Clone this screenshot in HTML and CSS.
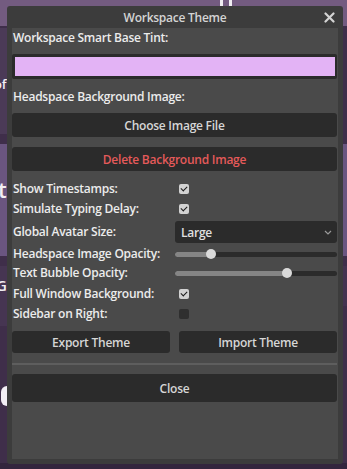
FILE: index.html
```html
<!DOCTYPE html>
<html lang="en">
<head>
    <meta charset="UTF-8">
    <meta name="viewport" content="width=device-width, initial-scale=1.0">
    <title>Workspace Theme</title>
    <link rel="stylesheet" href="styles.css">
</head>
<body>
    <div class="app">
        <div class="topbar"><span class="pause-mark"></span></div>
        <div class="stage">
            <div class="side-left">
                <div class="blk blk-a"><span class="peek">of</span></div>
                <div class="blk blk-b"><span class="peek peek-big">lt</span></div>
                <div class="blk blk-c"><span class="peek">G</span></div>
                <div class="blk blk-d"><span class="peek-moon"></span></div>
            </div>
            <div class="side-right">
                <div class="blk blk-r1"></div>
                <div class="blk blk-r2"></div>
            </div>
        </div>
        <div class="bottombar"></div>
    </div>

    <div class="dialog">
        <div class="dialog-title">
            <span>Workspace Theme</span>
            <svg class="close-x" width="11" height="11" viewBox="0 0 11 11">
                <path d="M1.5 1.5 L9.5 9.5 M9.5 1.5 L1.5 9.5" stroke="#d4d4d4" stroke-width="2.2" stroke-linecap="round"/>
            </svg>
        </div>
        <div class="dialog-body">
            <div class="label first">Workspace Smart Base Tint:</div>
            <div class="color-pick"><div class="swatch"></div></div>

            <div class="label second">Headspace Background Image:</div>
            <button class="button choose">Choose Image File</button>
            <button class="button danger">Delete Background Image</button>

            <div class="settings">
                <div class="row">
                    <span class="label">Show Timestamps:</span>
                    <span class="check on"></span>
                </div>
                <div class="row">
                    <span class="label">Simulate Typing Delay:</span>
                    <span class="check on"></span>
                </div>
                <div class="row row-select">
                    <span class="label">Global Avatar Size:</span>
                    <div class="select">
                        <span>Large</span>
                        <svg width="8" height="5" viewBox="0 0 8 5"><path d="M1 1 L4 4 L7 1" fill="none" stroke="#9a9a9a" stroke-width="1.2"/></svg>
                    </div>
                </div>
                <div class="row row-slider">
                    <span class="label">Headspace Image Opacity:</span>
                    <div class="slider"><div class="fill" style="width: 22%"></div><div class="grab" style="left: 22%"></div></div>
                </div>
                <div class="row row-slider">
                    <span class="label">Text Bubble Opacity:</span>
                    <div class="slider"><div class="fill" style="width: 69%"></div><div class="grab" style="left: 69%"></div></div>
                </div>
                <div class="row after-slider">
                    <span class="label">Full Window Background:</span>
                    <span class="check on"></span>
                </div>
                <div class="row">
                    <span class="label">Sidebar on Right:</span>
                    <span class="check"></span>
                </div>
            </div>

            <div class="pair">
                <button class="button">Export Theme</button>
                <button class="button">Import Theme</button>
            </div>
            <div class="separator"></div>
            <button class="button close">Close</button>
        </div>
    </div>
</body>
</html>
```

FILE: styles.css
```css
* {
    box-sizing: border-box;
}
body {
    margin: 0;
    width: 347px;
    height: 469px;
    overflow: hidden;
    font-family: "Open Sans", "Noto Sans", sans-serif;
    font-weight: 600;
    font-size: 12px;
    letter-spacing: -0.25px;
    background: #3f2e4a;
}
.app {
    display: flex;
    flex-direction: column;
    height: 469px;
}
.topbar {
    height: 26px;
    background: #735b80;
    position: relative;
}
.pause-mark {
    position: absolute;
    left: 220px;
    top: 0;
    width: 12px;
    height: 6px;
    border-left: 3px solid #f0eef2;
    border-right: 3px solid #f0eef2;
}
.stage {
    flex: 1;
    display: flex;
    justify-content: space-between;
}
.side-left {
    width: 8px;
    display: flex;
    flex-direction: column;
    padding-top: 2px;
    overflow: hidden;
}
.side-right {
    width: 5px;
    display: flex;
    flex-direction: column;
    padding-top: 118px;
}
.blk {
    position: relative;
}
.blk-a {
    height: 106px;
    background: #4b3a57;
}
.blk-b {
    height: 112px;
    margin-top: 10px;
    background: #6a5580;
}
.blk-c {
    height: 60px;
    margin-top: 10px;
    background: #463552;
}
.blk-d {
    height: 90px;
    margin-top: 10px;
    background: #3f2e4a;
}
.blk-r1 {
    height: 112px;
    background: #6a5580;
}
.blk-r2 {
    height: 40px;
    margin-top: 10px;
    background: #443350;
}
.peek {
    position: absolute;
    left: -6px;
    top: 50px;
    color: #f2eef4;
    font-size: 13px;
    line-height: 1;
}
.peek-big {
    top: 34px;
    font-size: 22px;
    left: -8px;
}
.blk-c .peek {
    top: 12px;
    left: -4px;
    font-size: 15px;
}
.peek-moon {
    position: absolute;
    left: 1px;
    top: 50px;
    width: 6px;
    height: 20px;
    background: #f2eef4;
    border-radius: 6px 0 0 6px;
}
.bottombar {
    height: 6px;
    background: #33253d;
}

.dialog {
    position: absolute;
    left: 7px;
    top: 6px;
    width: 336px;
    height: 458px;
    background: #3c3c3c;
    border-radius: 3px;
    display: flex;
    flex-direction: column;
}
.dialog-title {
    height: 22px;
    display: flex;
    align-items: center;
    justify-content: center;
    color: #d4d4d4;
    position: relative;
}
.close-x {
    position: absolute;
    right: 8px;
    top: 6px;
}
.dialog-body {
    flex: 1;
    margin: 0 5px 5px;
    background: #4a4a4a;
    display: flex;
    flex-direction: column;
}
.label {
    color: #ececec;
    height: 20px;
    line-height: 20px;
    padding-left: 1px;
    white-space: nowrap;
}
.color-pick {
    margin-top: 6px;
    height: 25px;
    margin-right: 1px;
    background: #2b2b2b;
    border-radius: 2px;
    padding: 3px 2px 3px 3px;
}
.swatch {
    height: 100%;
    background: #e3b3f5;
}
.label.second {
    margin-top: 8px;
}
.button {
    font: inherit;
    letter-spacing: inherit;
    height: 24px;
    border: none;
    border-radius: 3px;
    background: #2b2b2b;
    color: #d6d6d6;
    padding: 0;
    margin-right: 1px;
}
.choose {
    margin-top: 6px;
}
.danger {
    margin-top: 10px;
    color: #e55a5a;
}
.settings {
    margin-top: 8px;
    display: flex;
    flex-direction: column;
}
.row {
    display: grid;
    grid-template-columns: 163px 1fr;
    align-items: center;
    height: 20px;
}
.row-select {
    height: 22px;
    margin-top: 2px;
}
.row-slider {
    height: 19px;
}
.row-select + .row-slider {
    margin-top: 1px;
}
.after-slider {
    margin-top: 2px;
}
.check {
    width: 10px;
    height: 10px;
    margin-left: 4px;
    border-radius: 2px;
    background: #2f2f2f;
    position: relative;
}
.check.on {
    background: #d2d2d2;
}
.check.on::after {
    content: "";
    position: absolute;
    left: 2px;
    top: 2px;
    width: 5px;
    height: 3px;
    border-left: 1.5px solid #1c1c1c;
    border-bottom: 1.5px solid #1c1c1c;
    transform: rotate(-45deg);
}
.select {
    height: 22px;
    margin-right: 1px;
    background: #2b2b2b;
    border-radius: 3px;
    color: #e0e0e0;
    display: flex;
    align-items: center;
    justify-content: space-between;
    padding: 0 5px 0 6px;
}
.slider {
    position: relative;
    height: 5px;
    margin-right: 1px;
    background: #2b2b2b;
    border-radius: 3px;
}
.fill {
    height: 100%;
    background: #858585;
    border-radius: 3px 0 0 3px;
}
.grab {
    position: absolute;
    top: -3px;
    width: 10px;
    height: 10px;
    margin-left: -5px;
    border-radius: 50%;
    background: #dadada;
}
.pair {
    margin-top: 7px;
    display: flex;
    gap: 9px;
}
.pair .button {
    flex: 1;
    height: 22px;
}
.pair .button:first-child {
    margin-right: 0;
}
.separator {
    margin-top: 10px;
    height: 2px;
    background: #5e5e5e;
    margin-right: 1px;
}
.close {
    margin-top: 9px;
    height: 28px;
}
```
